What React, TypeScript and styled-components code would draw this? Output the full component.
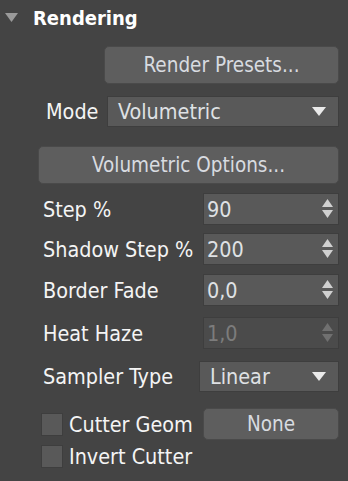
import React from "react";
import styled, { createGlobalStyle } from "styled-components";

const GlobalStyle = createGlobalStyle`
  html, body {
    margin: 0;
    padding: 0;
    background: #444444;
  }
  body {
    font-family: "DejaVu Sans Condensed", "DejaVu Sans", sans-serif;
    font-stretch: condensed;
  }
`;

const Panel = styled.div`
  width: 348px;
  height: 481px;
  overflow: hidden;
  background: #444444;
  color: #f2f2f2;
  font-size: 21.4px;
`;

const Header = styled.div`
  display: flex;
  align-items: center;
  height: 34px;
  padding: 1px 0 0 5px;
  gap: 14px;
`;

const Title = styled.span`
  font-weight: bold;
  font-size: 20px;
  color: #ffffff;
`;

const Body = styled.div`
  display: flex;
  flex-direction: column;
  padding: 0 9px 0 38px;
`;

const Row = styled.div<{ $top: number }>`
  display: flex;
  align-items: center;
  margin-top: ${(p) => p.$top}px;
`;

const Label = styled.span<{ $indent?: number }>`
  margin-left: ${(p) => p.$indent ?? 5}px;
  color: #f4f4f4;
  white-space: nowrap;
`;

const Button = styled.button<{ $width?: number; $height?: number }>`
  margin-left: auto;
  width: ${(p) => (p.$width ? `${p.$width}px` : "100%")};
  height: ${(p) => p.$height ?? 38}px;
  background: #5e5e5e;
  border: 1px solid #4a4a4a;
  border-radius: 5px;
  color: #d8dbe0;
  font-family: inherit;
  font-stretch: condensed;
  font-size: 20.5px;
  padding: 0;
`;

const Select = styled.div<{ $width: number }>`
  margin-left: auto;
  width: ${(p) => p.$width}px;
  height: 31px;
  box-sizing: border-box;
  background: #595959;
  border: 1px solid #3e3e3e;
  display: flex;
  align-items: center;
  justify-content: space-between;
  padding: 0 12px 0 10px;
  color: #dfe1e4;
`;

const Spinner = styled.div<{ $disabled?: boolean }>`
  margin-left: auto;
  width: 136px;
  height: 32px;
  box-sizing: border-box;
  background: ${(p) => (p.$disabled ? "#4b4b4b" : "#595959")};
  border: 1px solid #3e3e3e;
  display: flex;
  align-items: center;
  justify-content: space-between;
  padding: 0 5px 0 3px;
  color: ${(p) => (p.$disabled ? "#7c7c7c" : "#dfe1e4")};
`;

const Check = styled.span`
  width: 22px;
  height: 23px;
  box-sizing: border-box;
  margin-left: 3px;
  background: #595959;
  border: 1px solid #3e3e3e;
  flex: none;
`;

const CheckLabel = styled.span`
  margin-left: 6px;
  color: #f4f4f4;
`;

const Collapse = () => (
  <svg width="14" height="10" viewBox="0 0 14 10">
    <polygon points="0,0 13,0 6.5,9" fill="#9a9a9a" />
  </svg>
);

const DropArrow = () => (
  <svg width="14" height="10" viewBox="0 0 14 10">
    <polygon points="0,0 14,0 7,9" fill="#eaeaea" />
  </svg>
);

const Arrows = ({ dim }: { dim?: boolean }) => (
  <svg width="11" height="20" viewBox="0 0 11 20">
    <polygon points="5.5,0 11,8 0,8" fill={dim ? "#707070" : "#d0d0d0"} />
    <polygon points="0,11 11,11 5.5,19" fill={dim ? "#707070" : "#d0d0d0"} />
  </svg>
);

const spinners = [
  { label: "Step %", value: "90", top: 9 },
  { label: "Shadow Step %", value: "200", top: 8 },
  { label: "Border Fade", value: "0,0", top: 9 },
  { label: "Heat Haze", value: "1,0", top: 11, disabled: true },
];

export default function App() {
  return (
    <Panel>
      <GlobalStyle />
      <Header>
        <Collapse />
        <Title>Rendering</Title>
      </Header>
      <Body>
        <Row $top={11}>
          <Button $width={235}>Render Presets...</Button>
        </Row>
        <Row $top={12}>
          <Label $indent={8}>Mode</Label>
          <Select $width={232}>
            <span>Volumetric</span>
            <DropArrow />
          </Select>
        </Row>
        <Row $top={19}>
          <Button>Volumetric Options...</Button>
        </Row>
        {spinners.map((s) => (
          <Row key={s.label} $top={s.top}>
            <Label>{s.label}</Label>
            <Spinner $disabled={s.disabled}>
              <span>{s.value}</span>
              <Arrows dim={s.disabled} />
            </Spinner>
          </Row>
        ))}
        <Row $top={12}>
          <Label>Sampler Type</Label>
          <Select $width={140}>
            <span>Linear</span>
            <DropArrow />
          </Select>
        </Row>
        <Row $top={16}>
          <Check />
          <CheckLabel>Cutter Geom</CheckLabel>
          <Button $width={136} $height={32}>None</Button>
        </Row>
        <Row $top={4}>
          <Check />
          <CheckLabel>Invert Cutter</CheckLabel>
        </Row>
      </Body>
    </Panel>
  );
}
